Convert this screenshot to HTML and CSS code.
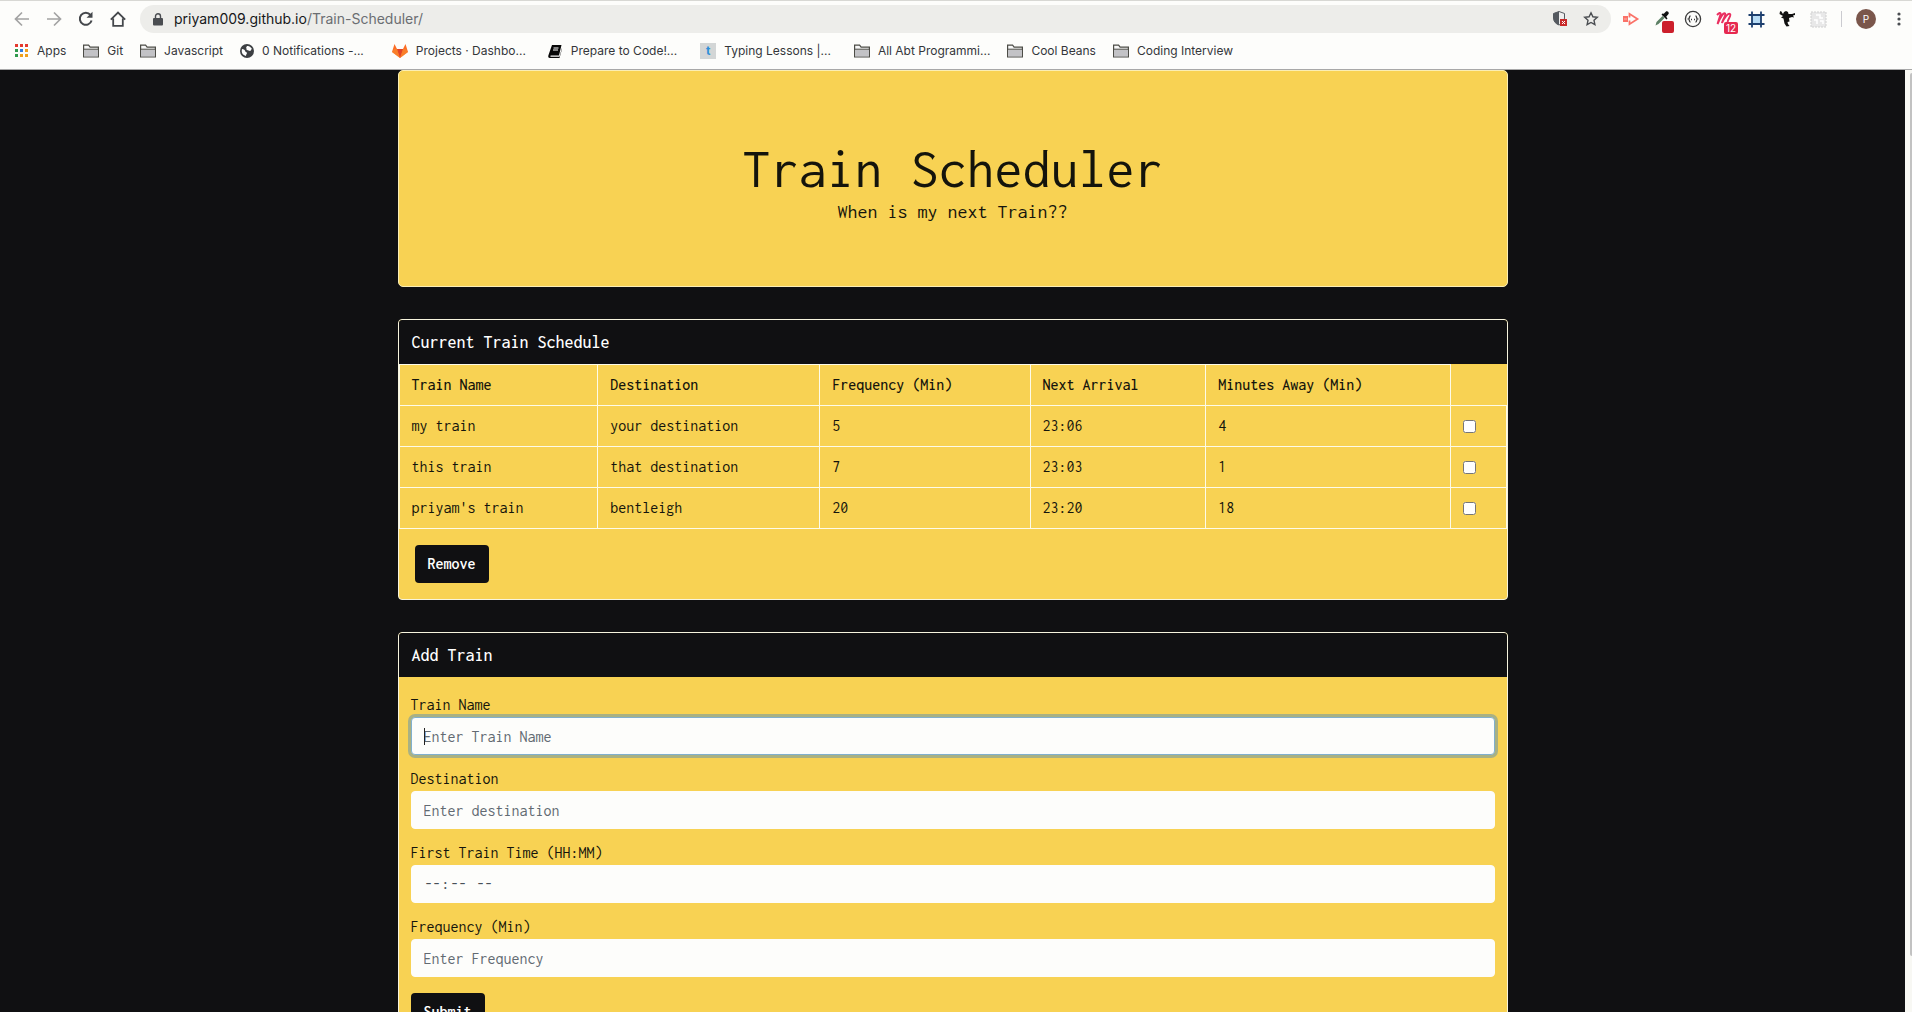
FILE: index.html
```html
<!DOCTYPE html>
<html lang="en-US">
<head>
<meta charset="utf-8">
<title>Train Scheduler</title>
<link rel="stylesheet" href="styles.css">
</head>
<body>
<header class="browser">
  <div class="toolbar">
    <nav class="nav-buttons" aria-label="Navigation">
      <button class="icon-btn dim" type="button" aria-label="Back"><svg width="16" height="16" viewBox="0 0 16 16" fill="none" stroke="currentColor" stroke-width="1.7"><path d="M15 8H2M8 1.5 1.5 8 8 14.5"/></svg></button>
      <button class="icon-btn dim" type="button" aria-label="Forward"><svg width="16" height="16" viewBox="0 0 16 16" fill="none" stroke="currentColor" stroke-width="1.7"><path d="M1 8h13M8 1.5 14.5 8 8 14.5"/></svg></button>
      <button class="icon-btn" type="button" aria-label="Reload"><svg width="16" height="16" viewBox="0 0 16 16" fill="none" stroke="currentColor" stroke-width="2"><path d="M13.6 9.5A6 6 0 1 1 12.5 4"/><path d="M14.5.8v6h-6z" fill="currentColor" stroke="none"/></svg></button>
      <button class="icon-btn" type="button" aria-label="Home"><svg width="16" height="16" viewBox="0 0 16 16" fill="none" stroke="currentColor" stroke-width="1.8"><path d="M.8 8.6 8 1.6l7.200 7M3.200 7.500v7.300h9.600V7.500"/></svg></button>
    </nav>
    <div class="omnibox">
      <svg width="10" height="13" viewBox="0 0 10 13"><path d="M1 5h8a1 1 0 0 1 1 1v5.500a1 1 0 0 1-1 1H1a1 1 0 0 1-1-1V6a1 1 0 0 1 1-1z" fill="#4a4d51"/><path d="M2.500 5.500V3.300a2.500 2.500 0 0 1 5 0v2.200" fill="none" stroke="#4a4d51" stroke-width="1.400"/></svg>
      <span class="url">priyam009.github.io<span class="path">/Train-Scheduler/</span></span>
      <svg class="shield" width="15" height="16" viewBox="0 0 15 16"><path d="M6 .5 11.500 2.500V7c0 3.500-2.500 6-5.500 7C3 13 .5 10.500.5 7V2.500z" fill="#eee" stroke="#555a60"/><path d="M6 .5V14C3 13 .5 10.500.5 7V2.500z" fill="#555a60"/><path d="M7 8h7v7H7z" fill="#c92a2a"/><path d="m9 10 3 3m0-3-3 3" stroke="#fff"/></svg>
      <svg width="16" height="16" viewBox="0 0 16 16"><path d="m8 1.800 1.900 4 4.400.5-3.300 3 .9 4.400L8 11.500l-3.900 2.200.9-4.400-3.300-3 4.400-.5z" fill="none" stroke="#4a4d51" stroke-width="1.400"/></svg>
    </div>
    <div class="extensions">
      <svg width="18" height="16" viewBox="0 0 18 16"><path d="M1 5h5v6H1z" fill="#fa7268"/><path d="M7.500 3.500V2.800L15.500 8l-8 5.200v-.7M7.500 3v3.500M7.500 9.500V13" fill="none" stroke="#fa7268" stroke-width="1.800"/><path d="M2 8h3" stroke="#fdb3ac"/></svg>
      <span class="with-badge"><svg width="16" height="16" viewBox="0 0 16 16"><path d="m1.500 14.500 1-3.500 6-6 2 2-6 6z" fill="#5d8065"/><path d="m7.500 3.500 5 5 1-1-1.300-1.800L14.500 3c1-1.500-1-3.500-2.500-2.500L9.800 2.800 8.500 2.500z" fill="#111"/></svg><span class="badge red"></span></span>
      <svg width="18" height="18" viewBox="0 0 18 18" fill="none" stroke="#3c3c3c" stroke-width="1.300"><circle cx="9" cy="9" r="7.600"/><path d="M6.500 6C4.800 6 6 8.500 4.500 9 6 9.500 4.800 12 6.500 12M11.500 6c1.700 0 .5 2.500 2 3-1.500.5-.3 3-2 3M7 9.500h1m2 0h1"/></svg>
      <span class="with-badge"><svg width="18" height="14" viewBox="0 0 18 14" fill="none" stroke="#ea2f60" stroke-width="2"><path d="M1 3C3 1 5 0 4.500 2.500L1.500 12C4 6 7.500 0 9 1.500S6 9 6 11c2-5 6-10.500 8-9S10 9 12 11"/></svg><span class="badge pink">12</span></span>
      <svg width="17" height="17" viewBox="0 0 17 17"><path d="M4 4h9v9H4z" fill="#b8dcf5"/><path d="M4 .5v16M13 .5v16M.5 4h16M.5 13h16" stroke="#1d3f6e" stroke-width="1.800"/></svg>
      <svg width="17" height="18" viewBox="0 0 17 18"><path d="m2 1 2 3 1-2 2-1 2 1 .5 2H13l3-1v2l-2 .5 1 2-2-.5-3 1 .5 3.500-2 .5.500 2 1.500 2-3 .5-2-3-1-5-2.500-1L4 6 .5 4 1 1.500z" fill="#111"/></svg>
      <svg width="17" height="17" viewBox="0 0 17 17"><path d="M1 1h15v15H1z" fill="#e8e8e8" stroke="#d0d0d0" stroke-dasharray="2 1"/><path d="M6 4h4v3h3M4 9h3v4M10 10h3v3" fill="none" stroke="#fff" stroke-width="1.500"/></svg>
      <span class="divider"></span>
      <button class="avatar" type="button">P</button>
      <button class="icon-btn menu" type="button" aria-label="Menu"><svg width="4" height="14" viewBox="0 0 4 14" fill="#4a4d51"><circle cx="2" cy="2" r="1.600"/><circle cx="2" cy="7" r="1.600"/><circle cx="2" cy="12" r="1.600"/></svg></button>
    </div>
  </div>
  <nav class="bookmarks" aria-label="Bookmarks">
    <a href="#"><svg width="14" height="14" viewBox="0 0 14 14"><path d="M0 0h3v3H0zM5 0h3v3H5zM10 0h3v3h-3z" fill="#e53a2e"/><path d="M0 5h3v3H0zM0 10h3v3H0z" fill="#2f9a4c"/><path d="M5 5h3v3H5z" fill="#2f7de0"/><path d="M10 5h3v3h-3zM5 10h3v3H5zM10 10h3v3h-3z" fill="#f0a01c"/></svg>Apps</a>
    <a href="#"><svg width="16" height="14" viewBox="0 0 16 14"><use href="#folder"/></svg>Git</a>
    <a href="#"><svg width="16" height="14" viewBox="0 0 16 14"><use href="#folder"/></svg>Javascript</a>
    <a href="#" class="notices"><svg width="14" height="14" viewBox="0 0 14 14"><circle cx="7" cy="7" r="7" fill="#3d4043"/><path d="M2 5c2 0 3 1 3 2s2 1 2 2-1 1-1 3c-3-1-5-3-4-7zM7 2c2-.500 4 1 5 3-1 0-1 2-2 2S8 6 7 6s0-2-1-2z" fill="#fff"/></svg>0 Notifications -...</a>
    <a href="#" class="projects"><svg width="16" height="14" viewBox="0 0 16 14"><path d="M8 14 0 8l2.500-8L5 5h6l2.500-5L16 8z" fill="#fc6d26"/><path d="M8 14 5 5h6z" fill="#e24329"/><path d="M0 8 2 5h3l3 9zM16 8l-2-3h-3L8 14z" fill="#f78a2c" opacity=".6"/></svg>Projects · Dashbo...</a>
    <a href="#" class="site"><svg width="16" height="13" viewBox="-1 0 16 13"><path d="M4 0h9.500L11 10.500H3c-1 0-1 1.300 0 1.300h8.500L14 3v1l-2.500 9H2C0 13 0 11 .5 10z" fill="#080808"/><path d="M5.500 3h5M5 5h5" stroke="#fff"/></svg>Prepare to Code!...</a>
    <a href="#" class="site"><span class="tile">t</span>Typing Lessons |...</a>
    <a href="#"><svg width="16" height="14" viewBox="0 0 16 14"><use href="#folder"/></svg>All Abt Programmi...</a>
    <a href="#"><svg width="16" height="14" viewBox="0 0 16 14"><use href="#folder"/></svg>Cool Beans</a>
    <a href="#"><svg width="16" height="14" viewBox="0 0 16 14"><g id="folder"><path d="M.6 1.200h5l1.500 2h8.300v9.700H.6z" fill="#f8f8f8" stroke="#4c4c46" stroke-width="1.200"/><path d="M1 5.500h14v7H1z" fill="#c3c3c6"/><path d="M.6 5.200h14.800" stroke="#4c4c46"/></g></svg>Coding Interview</a>
  </nav>
</header>
<div class="viewport">
  <main class="page">
    <div class="container">
      <section class="jumbotron">
        <h1>Train Scheduler</h1>
        <p>When is my next Train??</p>
      </section>
      <section class="card">
        <h2>Current Train Schedule</h2>
        <table>
          <thead><tr><th>Train Name</th><th>Destination</th><th>Frequency (Min)</th><th>Next Arrival</th><th>Minutes Away (Min)</th><td></td></tr></thead>
          <tbody>
            <tr><td>my train</td><td>your destination</td><td>5</td><td>23:06</td><td>4</td><td><input type="checkbox" aria-label="Select my train"></td></tr>
            <tr><td>this train</td><td>that destination</td><td>7</td><td>23:03</td><td>1</td><td><input type="checkbox" aria-label="Select this train"></td></tr>
            <tr><td>priyam's train</td><td>bentleigh</td><td>20</td><td>23:20</td><td>18</td><td><input type="checkbox" aria-label="Select priyam's train"></td></tr>
          </tbody>
        </table>
        <div class="actions"><button class="btn" type="button">Remove</button></div>
      </section>
      <section class="card">
        <h2>Add Train</h2>
        <form>
          <div class="field"><label for="name">Train Name</label><div class="control"><input id="name" type="text" placeholder="Enter Train Name" autofocus><span class="caret"></span></div></div>
          <div class="field"><label for="dest">Destination</label><input id="dest" type="text" placeholder="Enter destination"></div>
          <div class="field"><label for="time">First Train Time (HH:MM)</label><input id="time" type="time"></div>
          <div class="field"><label for="freq">Frequency (Min)</label><input id="freq" type="text" placeholder="Enter Frequency"></div>
          <button class="btn" type="submit">Submit</button>
        </form>
      </section>
    </div>
  </main>
  <div class="scrollbar"><div class="thumb"></div></div>
</div>
</body>
</html>
```
FILE: styles.css
```css
* { box-sizing: border-box; }

body {
  margin: 0;
  height: 100vh;
  display: flex;
  flex-direction: column;
  overflow: hidden;
  background: #101012;
  font-family: Inconsolata, "DejaVu Sans Mono", monospace;
  font-size: 16px;
  line-height: 24px;
  color: #14140c;
}

button, input { font: inherit; }
h1, h2, p { margin: 0; font-weight: 400; }

/* Browser chrome */
.browser {
  flex: none;
  height: 70px;
  background: #fdfdfb;
  border-top: 1px solid #d8d8d4;
  border-bottom: 1px solid #a8a8a8;
  font-family: Inter, Roboto, sans-serif;
  color: #34363a;
}
.toolbar { display: flex; align-items: center; height: 36px; padding: 0 4px 0 14px; }
.nav-buttons { display: flex; gap: 16px; width: 126px; }
.icon-btn { display: flex; justify-content: center; padding: 0; border: 0; background: none; color: #45484c; }
.menu { width: 18px; }
.dim { color: #a3a3a3; }
.omnibox {
  flex: 1;
  display: flex;
  align-items: center;
  gap: 15px;
  height: 28px;
  padding: 0 12px 0 13px;
  border-radius: 14px;
  background: #ededea;
}
.url { flex: 1; margin-left: -4px; font-size: 14px; line-height: 20px; color: #17181a; }
.path { color: #6b6e72; }
.extensions { display: flex; align-items: center; gap: 14px; padding-left: 11px; }
.with-badge { position: relative; display: flex; }
.badge {
  position: absolute;
  left: 8px;
  top: 10px;
  height: 12px;
  border-radius: 2px;
  color: #fff;
  font-size: 10px;
  line-height: 12px;
  text-align: center;
}
.red { width: 12px; background: #cc1f2b; }
.pink { width: 14px; background: #e6294f; }
.divider { width: 1px; height: 16px; background: #cbcbd0; }
.avatar {
  width: 20px;
  height: 20px;
  padding: 0;
  border: 0;
  border-radius: 50%;
  background: #7a564b;
  color: #fff;
  font-size: 10px;
  line-height: 20px;
}

.bookmarks { display: flex; align-items: center; gap: 17px; height: 28px; padding-left: 15px; }
.bookmarks a {
  display: flex;
  align-items: center;
  gap: 8px;
  color: inherit;
  font-size: 12px;
  line-height: 16px;
  white-space: nowrap;
  text-decoration: none;
}
.bookmarks .site { padding-right: 6px; }
.bookmarks .notices { padding-right: 11px; }
.bookmarks .projects { padding-right: 4px; }
.tile { width: 16px; height: 16px; background: #d3d6d6; color: #2d8fd8; font-weight: 700; text-align: center; }

/* Page */
.viewport { flex: 1; min-height: 0; display: flex; }
.page { flex: 1; min-width: 0; overflow: hidden; }
.scrollbar { width: 7px; padding: 3px 0 0 5px; background: #f8f8f4; }
.thumb { height: 94%; border-radius: 2px 0 0 2px; background: #c2c2c2; }
.container { display: flex; flex-direction: column; gap: 32px; max-width: 1110px; margin: 0 auto; }

.jumbotron {
  padding: 66px 32px 62px;
  border: 1px solid #fbeeb4;
  border-radius: 5px;
  background: #f8d253;
  text-align: center;
}
.jumbotron h1 { font-size: 56px; line-height: 63px; }
.jumbotron p { font-size: 20px; line-height: 24px; }

.card {
  border: 1px solid #f7f4de;
  border-radius: 4px;
  background: #f8d253;
  overflow: hidden;
}
.card h2 {
  padding: 10px 13px;
  background: #101012;
  color: #fff;
  font-size: 18px;
  font-weight: 500;
  line-height: 24px;
}

table { width: 100%; border-collapse: collapse; }
th, td {
  height: 41px;
  padding: 8px 12px;
  border: 1px solid #fdfbe8;
  font-weight: 400;
  text-align: left;
}
th { font-weight: 500; }
thead td { border-top: 0; border-right: 0; }
td input { display: block; margin: 0; }

.actions { padding: 16px; }
.btn {
  height: 38px;
  padding: 0 13px;
  border: 0;
  border-radius: 4px;
  background: #101012;
  color: #fff;
  font-weight: 600;
}

form { display: flex; flex-direction: column; align-items: flex-start; gap: 12px; padding: 16px 12px; }
form .btn { margin-top: 4px; }
.field { width: 100%; }
.field label { display: block; }
.field input {
  display: block;
  width: 100%;
  height: 38px;
  padding: 6px 12px;
  border: 1px solid #fdfdfb;
  border-radius: 4px;
  background: #fdfdfb;
  color: #495057;
}
.field input::placeholder { color: #626a72; opacity: 1; }
.field input::-webkit-calendar-picker-indicator { display: none; }
.field input::-webkit-datetime-edit-ampm-field { margin-left: 4px; }
.field input:focus { outline: 0; border-color: #80b0cf; box-shadow: 0 0 0 3px #a9b183; caret-color: transparent; }
.control { position: relative; }
.caret { position: absolute; left: 13px; top: 11px; width: 1px; height: 17px; background: #222; }
```
